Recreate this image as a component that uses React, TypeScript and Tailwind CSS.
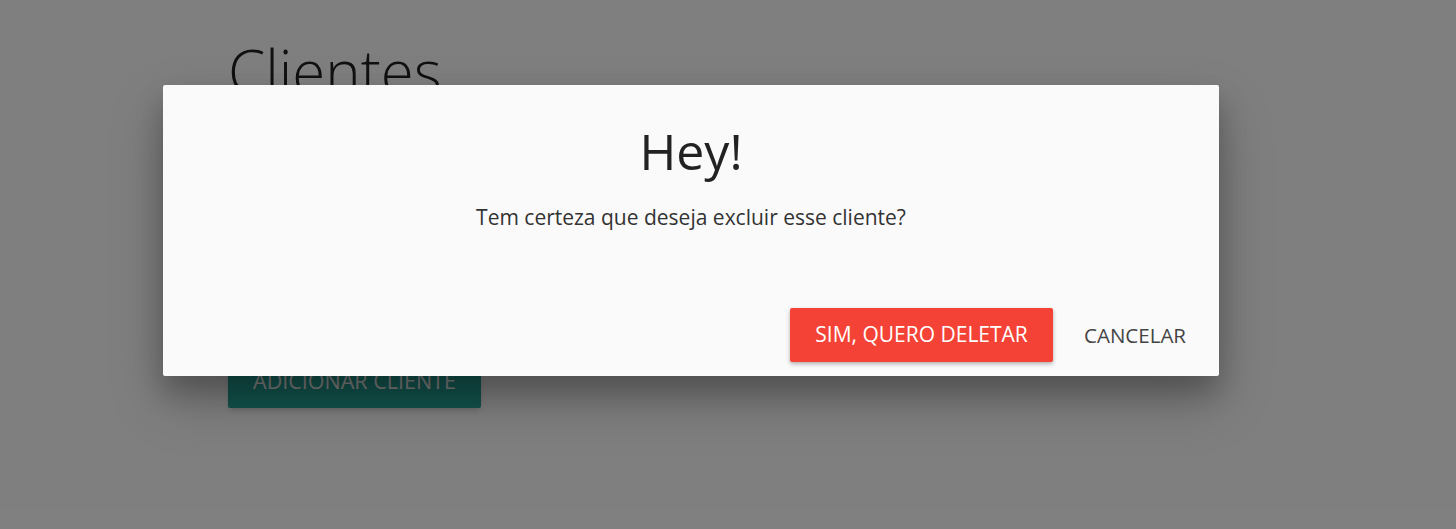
export default function App() {
  return (
    <div
      className="relative h-[529px] w-full overflow-hidden bg-white"
      style={{ fontFamily: '"Open Sans", "Noto Sans", sans-serif' }}
    >
      {/* page behind the overlay */}
      <div className="pl-[228px] pt-[36px]">
        <h3 className="text-[60px] font-light leading-[70px] text-[#222]">Clientes</h3>
        <div className="h-[248px]" />
        <button className="h-[54px] w-[253px] rounded-[2px] bg-[#26a69a] text-[21.5px] text-white shadow-md">
          ADICIONAR CLIENTE
        </button>
      </div>

      {/* overlay */}
      <div className="absolute inset-0 bg-black/50" />

      {/* modal */}
      <div className="absolute left-[163px] top-[85px] flex h-[291px] w-[1056px] flex-col rounded-[2px] bg-[#fafafa] shadow-[0_16px_28px_0_rgba(0,0,0,0.22),0_25px_55px_0_rgba(0,0,0,0.21)]">
        <div className="flex flex-1 flex-col items-center pt-[35px]">
          <h4 className="text-[50px] font-normal leading-[62px] text-[#222]">Hey!</h4>
          <p className="mt-[20px] text-[21px] text-[#333]">
            Tem certeza que deseja excluir esse cliente?
          </p>
        </div>
        <div className="flex items-center justify-end gap-[31px] pb-[14px] pr-[33px]">
          <button className="h-[54px] w-[263px] rounded-[2px] bg-[#f44336] text-[21px] text-white shadow-[0_2px_4px_0_rgba(0,0,0,0.3)]">
            SIM, QUERO DELETAR
          </button>
          <button className="text-[20.5px] text-[#444]">CANCELAR</button>
        </div>
      </div>
    </div>
  );
}
